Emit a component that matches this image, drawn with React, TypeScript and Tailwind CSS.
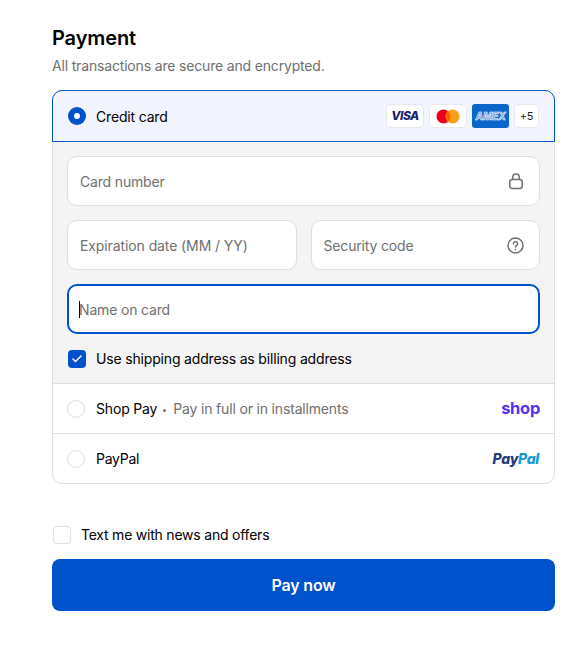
import type { ReactNode } from "react"
import { Check } from "lucide-react"

const font = { fontFamily: "Inter, sans-serif" }

function CardBadge({ children, className = "" }: { children: ReactNode; className?: string }) {
  return (
    <div
      className={`flex h-[24px] items-center justify-center rounded-[4px] border border-[#e6e8f0] bg-white ${className}`}
    >
      {children}
    </div>
  )
}

function Field({ label, icon, className = "" }: { label: string; icon?: ReactNode; className?: string }) {
  return (
    <div
      className={`flex h-[50px] items-center justify-between rounded-[10px] border border-[#dedede] bg-white pl-[12px] pr-[15px] text-[#707070] ${className}`}
    >
      <span>{label}</span>
      {icon}
    </div>
  )
}

function Radio() {
  return <div className="size-[18px] shrink-0 rounded-full border border-[#dedede] bg-white" />
}

function LockIcon() {
  return (
    <svg width="16" height="17" viewBox="0 0 16 17" fill="none" stroke="#707070" strokeWidth="1.5">
      <rect x="1.75" y="6.5" width="12.5" height="9" rx="2.5" />
      <path d="M4.75 6.5V4.25a3.25 3.25 0 0 1 6.5 0V6.5" />
    </svg>
  )
}

function HelpIcon() {
  return (
    <svg width="17" height="17" viewBox="0 0 17 17" fill="none" stroke="#707070" strokeWidth="1.5" strokeLinecap="round">
      <circle cx="8.5" cy="8.5" r="7.5" />
      <path d="M6.4 6.7a2.1 2.1 0 1 1 3.2 1.8c-.7.4-1.1.8-1.1 1.6" />
      <path d="M8.5 12.5v.2" />
    </svg>
  )
}

export default function App() {
  return (
    <div
      style={font}
      className="min-h-[671px] bg-white pl-[52px] pr-[29px] pt-[25px] text-[14px] tracking-[-0.17px] text-black"
    >
      <h2 className="text-[20px] font-semibold leading-[26px] tracking-[-0.1px]">Payment</h2>
      <p className="mt-[6px] leading-[17px] text-[#707070]">All transactions are secure and encrypted.</p>

      <div className="mt-[16px] rounded-[10px] border border-[#dedede]">
        <div className="-mx-px -mt-px flex h-[52px] items-center justify-between rounded-t-[10px] border border-[#0052cc] bg-[#f2f5fe] px-[15px]">
          <div className="flex items-center gap-[10px]">
            <div className="flex size-[18px] items-center justify-center rounded-full bg-[#0052cc]">
              <div className="size-[6px] rounded-full bg-white" />
            </div>
            <span>Credit card</span>
          </div>
          <div className="flex items-center gap-[5px]">
            <CardBadge className="w-[38px]">
              <span className="text-[12px] font-extrabold italic tracking-[-0.5px] text-[#1a1f71]">VISA</span>
            </CardBadge>
            <CardBadge className="w-[38px]">
              <svg width="24" height="15" viewBox="0 0 24 15">
                <circle cx="7.5" cy="7.5" r="7" fill="#eb001b" />
                <circle cx="16.5" cy="7.5" r="7" fill="#f79e1b" />
                <path d="M12 2.1a7 7 0 0 1 0 10.8a7 7 0 0 1 0-10.8z" fill="#ff5f00" />
              </svg>
            </CardBadge>
            <div className="flex h-[24px] w-[37px] items-center justify-center rounded-[3px] bg-[#0a66c8]">
              <span className="text-[10px] font-extrabold italic leading-none tracking-[-0.2px] text-white/40 [-webkit-text-stroke:0.5px_white]">
                AMEX
              </span>
            </div>
            <CardBadge className="w-[25px]">
              <span className="text-[11px] text-[#1a1a1a]">+5</span>
            </CardBadge>
          </div>
        </div>

        <div className="flex flex-col gap-[14px] bg-[#f4f4f4] p-[14px]">
          <Field label="Card number" icon={<LockIcon />} />
          <div className="flex gap-[14px]">
            <Field label="Expiration date (MM / YY)" className="flex-1 tracking-[-0.1px]" />
            <Field label="Security code" className="flex-1" icon={<HelpIcon />} />
          </div>
          <div className="flex h-[50px] items-center rounded-[10px] border-2 border-[#0052cc] bg-white pl-[10px] text-[#707070]">
            <div className="h-[17px] w-px bg-black" />
            <span className="-ml-px">Name on card</span>
          </div>
          <div className="flex items-center gap-[10px] pl-[1px]">
            <div className="flex size-[18px] items-center justify-center rounded-[4px] bg-[#0052cc]">
              <Check size={12} strokeWidth={3} className="text-white" />
            </div>
            <span>Use shipping address as billing address</span>
          </div>
        </div>

        <div className="flex h-[50px] items-center justify-between border-t border-[#dedede] px-[14px]">
          <div className="flex items-center gap-[11px]">
            <Radio />
            <span>
              Shop Pay
              <span className="ml-[6px] mr-[7px] inline-block size-[3px] rounded-full bg-[#707070] align-middle" />
              <span className="text-[#707070]">Pay in full or in installments</span>
            </span>
          </div>
          <span className="text-[16.5px] font-bold leading-none tracking-[-0.3px] text-[#5433eb]">shop</span>
        </div>

        <div className="flex h-[50px] items-center justify-between border-t border-[#dedede] pl-[14px] pr-[15px]">
          <div className="flex items-center gap-[11px]">
            <Radio />
            <span className="tracking-[-0.25px]">PayPal</span>
          </div>
          <span className="text-[14px] font-extrabold italic leading-none tracking-[-0.3px]">
            <span className="text-[#253b80]">Pay</span>
            <span className="text-[#179bd7]">Pal</span>
          </span>
        </div>
      </div>

      <div className="mt-[40px] flex items-center gap-[10px] pl-[1px]">
        <div className="size-[18px] rounded-[4px] border border-[#dedede] bg-white" />
        <span className="tracking-[-0.22px]">Text me with news and offers</span>
      </div>

      <button className="mt-[14px] h-[52px] w-full rounded-[8px] bg-[#0052cc] text-[16px] font-semibold text-white">
        Pay now
      </button>
    </div>
  )
}
